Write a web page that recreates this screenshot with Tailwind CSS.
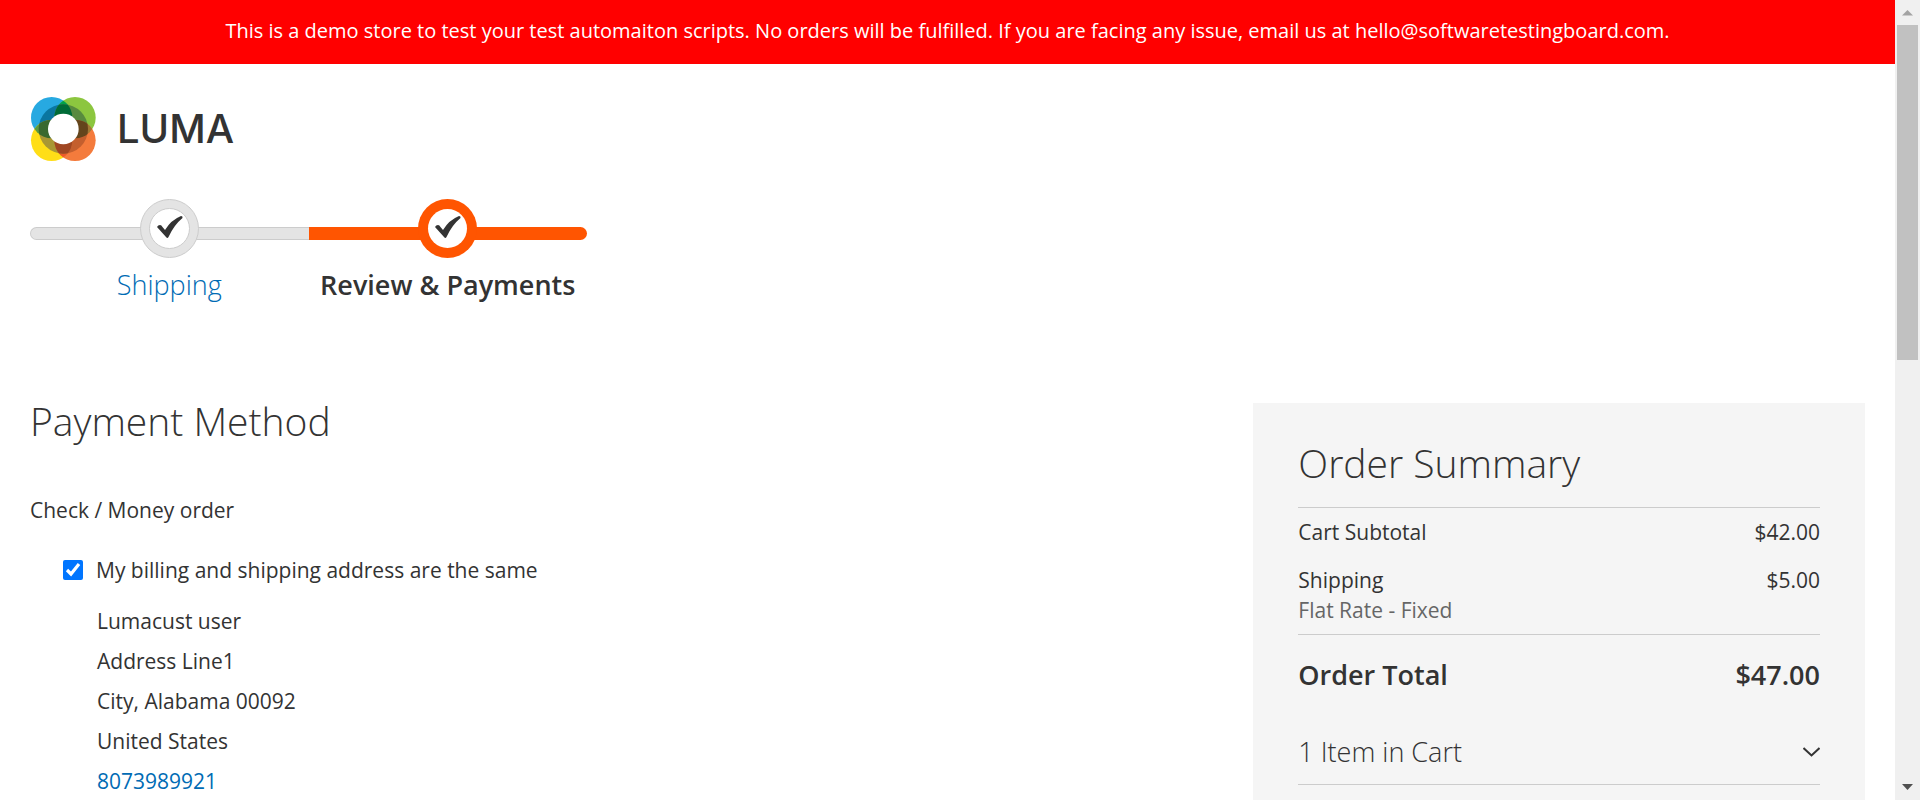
<!DOCTYPE html>
<html lang="en">
<head>
<meta charset="utf-8">
<meta name="viewport" content="width=device-width, initial-scale=1">
<title>Checkout</title>
<script src="https://cdn.jsdelivr.net/npm/@tailwindcss/browser@4"></script>
</head>
<body class="flex h-screen overflow-hidden bg-white font-['Open_Sans',sans-serif] text-[21px] leading-[30px] text-[#333]">
<div class="min-w-0 flex-1 overflow-hidden">
  <p class="bg-[red] px-8 pt-4 pb-[18px] text-center text-[20px] leading-[30px] text-white">This is a demo store to test your test automaiton scripts. No orders will be fulfilled. If you are facing any issue, email us at hello@softwaretestingboard.com.</p>

  <header class="px-[30px] pt-[33px]">
    <a href="#" aria-label="Luma" class="flex w-fit items-center gap-[21px] text-[#333]">
      <svg class="h-[64px] w-[66px]" viewBox="91 81 198 192" aria-hidden="true">
        <defs>
          <clipPath id="blue"><circle cx="156" cy="143" r="62"/></clipPath>
          <clipPath id="orange"><circle cx="226" cy="211" r="62"/></clipPath>
          <clipPath id="ring"><circle cx="191" cy="177" r="74"/></clipPath>
        </defs>
        <circle cx="156" cy="143" r="62" fill="#27a9e1"/>
        <circle cx="226" cy="143" r="62" fill="#8cc63f"/>
        <circle cx="156" cy="211" r="62" fill="#ffde17"/>
        <circle cx="226" cy="211" r="62" fill="#f47b3c"/>
        <g clip-path="url(#blue)">
          <circle cx="226" cy="143" r="62" fill="#00a14b"/>
          <circle cx="156" cy="211" r="62" fill="#5a9b3e"/>
        </g>
        <g clip-path="url(#orange)">
          <circle cx="226" cy="143" r="62" fill="#a07a35"/>
          <circle cx="156" cy="211" r="62" fill="#ef5a28"/>
        </g>
        <g clip-path="url(#ring)">
          <circle cx="156" cy="143" r="62" fill="#0a76a0"/>
          <circle cx="226" cy="143" r="62" fill="#588a3e"/>
          <circle cx="156" cy="211" r="62" fill="#a99734"/>
          <circle cx="226" cy="211" r="62" fill="#c45f2e"/>
          <g clip-path="url(#blue)">
            <circle cx="226" cy="143" r="62" fill="#006b37"/>
            <circle cx="156" cy="211" r="62" fill="#39692f"/>
          </g>
          <g clip-path="url(#orange)">
            <circle cx="226" cy="143" r="62" fill="#64451c"/>
            <circle cx="156" cy="211" r="62" fill="#a04722"/>
          </g>
        </g>
        <circle cx="191" cy="177" r="46" fill="#fff"/>
      </svg>
      <span class="font-['Inter',sans-serif] text-[40px] leading-[64px] font-medium">LUMA</span>
    </a>

    <ol class="mt-[38px] flex w-[557px] text-center text-[27px] leading-[36px]">
      <li class="flex flex-1 flex-col">
        <div class="flex h-[59px] items-center">
          <span class="mt-[10px] h-[13px] flex-1 rounded-l-full border border-r-0 border-[#ccc] bg-[#e4e4e4]"></span>
          <svg class="relative -mx-1 size-[59px]" viewBox="0 0 59 59" aria-hidden="true">
            <circle cx="29.5" cy="29.5" r="29" fill="#e4e4e4" stroke="#ccc"/>
            <circle cx="29.5" cy="29.5" r="20" fill="#fff" stroke="#ccc"/>
            <path d="M17 28Q18 26 20 26Q21.500 26 22.500 28L25 31Q31 21 41 17Q43 17 42.500 19Q34 26 28.500 38Q27.500 40 26 38Z" fill="#333"/>
          </svg>
          <span class="mt-[10px] h-[13px] flex-1 border-y border-[#ccc] bg-[#e4e4e4]"></span>
        </div>
        <a href="#" class="mt-[9px] font-light text-[#006bb4]">Shipping</a>
      </li>
      <li class="flex flex-1 flex-col" aria-current="step">
        <div class="flex h-[59px] items-center">
          <span class="mt-[10px] h-[13px] flex-1 bg-[#ff5501]"></span>
          <svg class="relative -mx-1 size-[59px]" viewBox="0 0 59 59" aria-hidden="true">
            <circle cx="29.500" cy="29.500" r="29.500" fill="#ff5501"/>
            <circle cx="29.500" cy="29.500" r="19.500" fill="#fff"/>
            <path d="M17 28Q18 26 20 26Q21.500 26 22.500 28L25 31Q31 21 41 17Q43 17 42.500 19Q34 26 28.500 38Q27.500 40 26 38Z" fill="#333"/>
          </svg>
          <span class="mt-[10px] h-[13px] flex-1 rounded-r-full bg-[#ff5501]"></span>
        </div>
        <span class="mt-[9px] font-semibold">Review &amp; Payments</span>
      </li>
    </ol>
  </header>

  <main class="flex items-start px-[30px] pt-[98px]">
    <section class="flex-1">
      <h2 class="text-[39px] leading-[40px] font-light">Payment Method</h2>
      <h3 class="mt-[54px]">Check / Money order</h3>
      <div class="mt-[30px] flex items-center pl-[33px]">
        <input id="same" type="checkbox" checked class="size-[20px] accent-[#0075ff]">
        <label for="same" class="pl-[13px]">My billing and shipping address are the same</label>
      </div>
      <address class="mt-4 pl-[67px] leading-[40px] not-italic">
        Lumacust user<br>Address Line1<br>City, Alabama 00092<br>United States<br><a href="tel:8073989921" class="text-[#006bb4]">8073989921</a>
      </address>
    </section>

    <aside class="mt-[2px] h-[500px] w-1/3 bg-[#f5f5f5] px-[45px] pt-10">
      <h2 class="text-[39px] leading-[40px] font-light">Order Summary</h2>
      <table class="mt-6 w-full border-t border-[#ccc]">
        <tbody>
          <tr><th scope="row" class="py-[9px] text-left font-normal">Cart Subtotal</th><td class="py-[9px] text-right">$42.00</td></tr>
          <tr class="border-b border-[#ccc]"><th scope="row" class="py-[9px] text-left font-normal">Shipping<span class="block text-[#666]">Flat Rate - Fixed</span></th><td class="py-[9px] text-right align-top">$5.00</td></tr>
          <tr class="text-[27px] font-semibold"><th scope="row" class="pt-[25px] text-left font-semibold">Order Total</th><td class="pt-[25px] text-right">$47.00</td></tr>
        </tbody>
      </table>
      <button type="button" aria-expanded="false" class="mt-[44px] flex w-full items-center justify-between border-b border-[#ccc] pb-[14px] text-[27px] leading-[36px] font-light">
        1 Item in Cart
        <svg class="h-[10px] w-[17px]" viewBox="0 0 17 10" fill="none" stroke="#333" stroke-width="2" aria-hidden="true"><path d="M.5 1L8.500 8.500L16.500 1"/></svg>
      </button>
    </aside>
  </main>
</div>

<!-- Window scroll bar -->
<div class="flex w-[25px] shrink-0 flex-col items-center justify-between bg-[#f0f0f0] pb-[10px]" aria-hidden="true">
  <div class="flex w-full flex-col items-center pr-px">
    <svg class="my-[9px] h-[7px] w-[11px]" viewBox="0 0 11 7"><path d="M0 6.500L5.500 1L11 6.500Z" fill="#a3a3a3"/></svg>
    <div class="h-[335px] w-[21px] bg-[#c1c1c1]"></div>
  </div>
  <svg class="h-[6px] w-[11px]" viewBox="0 0 11 6"><path d="M0 0H11L5.500 6Z" fill="#505050"/></svg>
</div>
</body>
</html>
